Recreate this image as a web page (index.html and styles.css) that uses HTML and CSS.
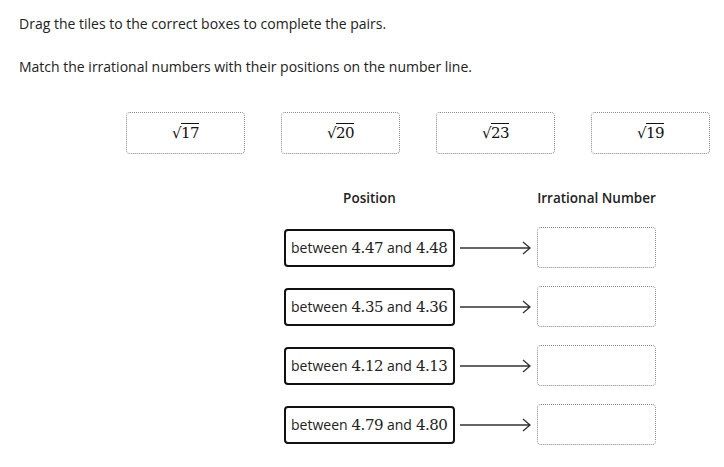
FILE: index.html
```html
<!DOCTYPE html>
<html lang="en">
<head>
  <meta charset="UTF-8" />
  <title>Match the Pairs</title>
  <link rel="stylesheet" href="styles.css">
</head>
<body>
  <div class="question">
    <p class="prompt">Drag the tiles to the correct boxes to complete the pairs.</p>
    <p class="prompt second">Match the irrational numbers with their positions on the number line.</p>

    <div class="tiles">
      <div class="tile"><span class="math">&radic;<span class="radicand">17</span></span></div>
      <div class="tile"><span class="math">&radic;<span class="radicand">20</span></span></div>
      <div class="tile"><span class="math">&radic;<span class="radicand">23</span></span></div>
      <div class="tile"><span class="math">&radic;<span class="radicand">19</span></span></div>
    </div>

    <div class="pairs">
      <div class="pair-head">Position</div>
      <div></div>
      <div class="pair-head">Irrational Number</div>

      <div class="position">between <span class="num">4.47</span> and <span class="num">4.48</span></div>
      <svg class="arrow" width="72" height="14" viewBox="0 0 72 14"><path d="M0 7H70M63 1L70 7L63 13" fill="none" stroke="#333" stroke-width="1.3"/></svg>
      <div class="drop"></div>

      <div class="position">between <span class="num">4.35</span> and <span class="num">4.36</span></div>
      <svg class="arrow" width="72" height="14" viewBox="0 0 72 14"><path d="M0 7H70M63 1L70 7L63 13" fill="none" stroke="#333" stroke-width="1.3"/></svg>
      <div class="drop"></div>

      <div class="position">between <span class="num">4.12</span> and <span class="num">4.13</span></div>
      <svg class="arrow" width="72" height="14" viewBox="0 0 72 14"><path d="M0 7H70M63 1L70 7L63 13" fill="none" stroke="#333" stroke-width="1.3"/></svg>
      <div class="drop"></div>

      <div class="position">between <span class="num">4.79</span> and <span class="num">4.80</span></div>
      <svg class="arrow" width="72" height="14" viewBox="0 0 72 14"><path d="M0 7H70M63 1L70 7L63 13" fill="none" stroke="#333" stroke-width="1.3"/></svg>
      <div class="drop"></div>
    </div>
  </div>
</body>
</html>
```

FILE: styles.css
```css
* {
  box-sizing: border-box;
  margin: 0;
  padding: 0;
}

body {
  font-family: 'Open Sans', 'Noto Sans', sans-serif;
  font-size: 14px;
  line-height: 20px;
  color: #222;
  background: #fff;
}

.question {
  padding: 14px 0 0 19px;
}

.prompt.second {
  margin-top: 23px;
}

.tiles {
  display: flex;
  gap: 36px;
  margin: 35px 0 0 107px;
}

.tile {
  width: 119px;
  height: 42px;
  border: 1px dotted #8a8a8a;
  border-radius: 4px;
  display: flex;
  align-items: center;
  justify-content: center;
}

.math {
  font-family: 'DejaVu Serif', serif;
  font-size: 15px;
  letter-spacing: -0.5px;
  color: #111;
}

.radicand {
  border-top: 1px solid #111;
}

.pairs {
  display: grid;
  grid-template-columns: 171px 72px 119px;
  column-gap: 5px;
  row-gap: 18px;
  align-items: center;
  margin: 34px 0 0 265px;
}

.pair-head {
  font-size: 13.5px;
  font-weight: 600;
  text-align: center;
  white-space: nowrap;
  color: #222;
  margin-bottom: 1px;
}

.position {
  height: 38px;
  border: 2px solid #111;
  border-radius: 4px;
  padding: 0 5px;
  display: flex;
  align-items: center;
  gap: 4px;
  white-space: nowrap;
  font-size: 14px;
}

.num {
  font-family: 'DejaVu Serif', serif;
  font-size: 15px;
  letter-spacing: -0.5px;
}

.arrow {
  display: block;
}

.drop {
  height: 41px;
  border: 1px dotted #8a8a8a;
  border-radius: 4px;
}
```
